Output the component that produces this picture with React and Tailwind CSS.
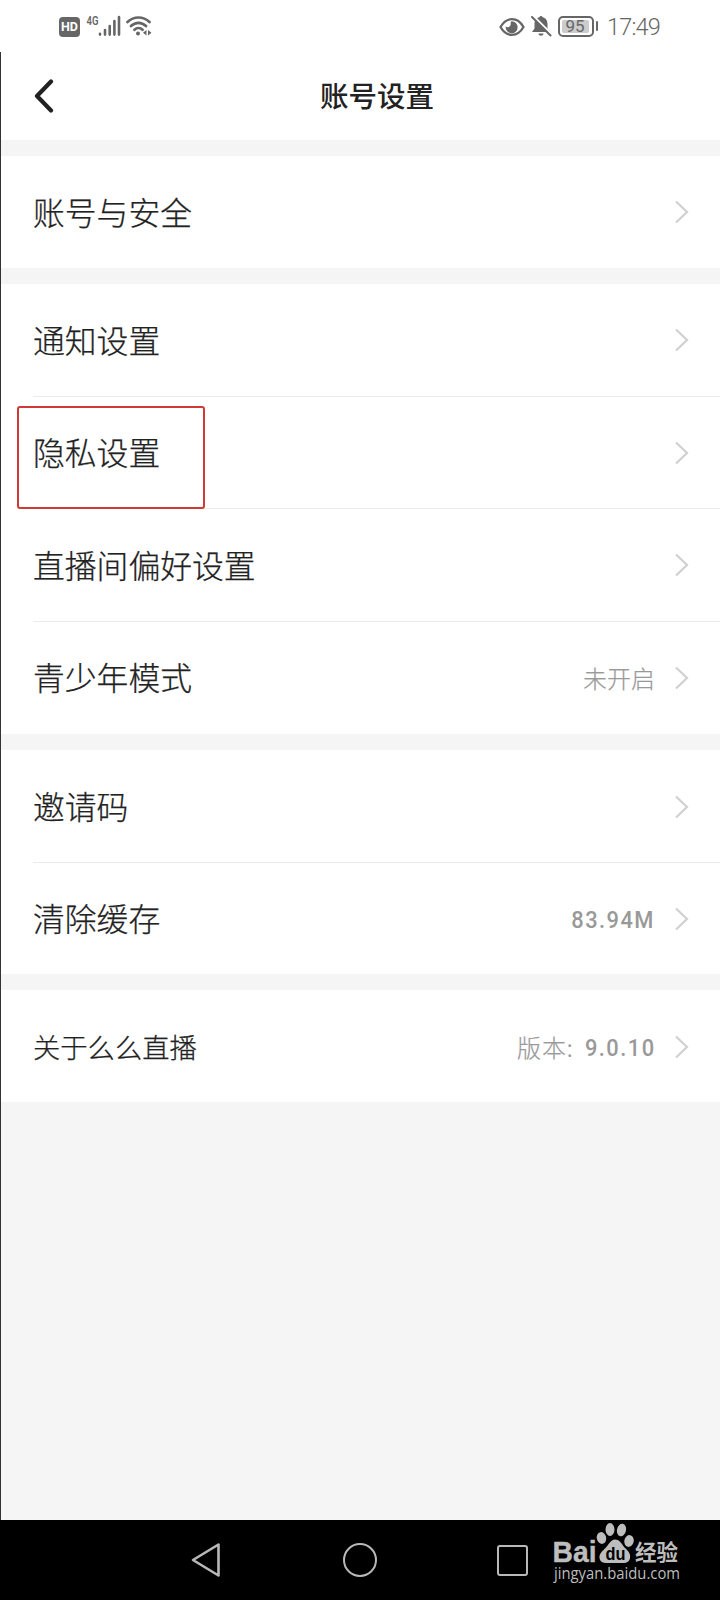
import React from 'react';

const groups = [
  { height: 'h-[112px]', rows: [{ label: '账号与安全' }] },
  {
    height: 'h-[450px]',
    rows: [
      { label: '通知设置' },
      { label: '隐私设置', marked: true },
      { label: '直播间偏好设置' },
      { label: '青少年模式', value: '未开启' },
    ],
  },
  { height: 'h-[224px]', low: true, rows: [{ label: '邀请码' }, { label: '清除缓存', number: '83.94M' }] },
  { height: 'h-[112px]', low: true, rows: [{ label: '关于么么直播', small: true, value: '版本:', number: '9.0.10' }] },
];

const StatusBar = () => (
  <div className="flex h-[52px] items-center justify-between pl-[59px] pr-[59px] text-[#666]">
    <div className="flex items-center">
      <div className="mt-0.5 flex h-5 w-[21px] items-center justify-center rounded-[4px] bg-[#666] font-['Roboto',sans-serif] text-[12.5px] font-bold text-white">
        HD
      </div>
      {/* 4G 信號 */}
      <svg className="ml-1.5 h-[22px] w-[35px] overflow-visible" viewBox="0 0 35 22">
        <text x="0.5" y="9.5" fontSize="12.5" fontWeight="600" fill="currentColor" textLength="12" lengthAdjust="spacingAndGlyphs" fontFamily="Roboto, sans-serif">4G</text>
        <path d="M14 18.800v0.800M19 15v4.600M23.700 11v8.600M28.400 6v13.600M33 2v17.600" stroke="currentColor" strokeWidth="2.6" strokeLinecap="round" />
      </svg>
      {/* WiFi */}
      <svg className="ml-[5px] h-[22px] w-[26px]" viewBox="0 0 26 22" fill="none" stroke="currentColor" strokeWidth="2.7" strokeLinecap="round">
        <path d="M1.500 7c6.500-6 15.500-6 22 0M5 11c4.500-4.200 10.500-4.200 15 0M8.500 14.800c2.300-2.200 5.700-2.200 8 0" />
        <circle cx="12" cy="18.500" r="2" fill="currentColor" stroke="none" />
        <path d="M20.500 15v5.500l-3.500-2.700zM22 15v5.500l3.500-2.700z" fill="currentColor" stroke="none" />
      </svg>
    </div>

    <div className="flex items-center">
      <svg className="mt-0.5 h-[20px] w-[26px]" viewBox="0 0 26 20" fill="none">
        <path d="M1.500 10C7.500-0.500 18.500-0.500 24.500 10 18.500 20.500 7.500 20.500 1.500 10z" stroke="currentColor" strokeWidth="2.300" />
        <path d="M12.500 4.200a6 6 0 1 1-5.800 5.300c1.800 1.600 5 .3 5-2.200 0-1.200-.2-2.300.8-3.100z" fill="currentColor" />
      </svg>
      <svg className="ml-[6px] h-[22px] w-[21px]" viewBox="0 0 21 22" fill="currentColor">
        <path d="M10 1c.9 0 1.500.6 1.500 1.300C15 3 16.500 5.800 16.500 9v4.500L19 17H1l2.500-3.500V9c0-3.200 1.500-6 5-6.700C8.500 1.600 9.100 1 10 1zM7.500 18.500h5c0 3-5 3-5 0z" />
        <path d="M2.200 0.800L21 19.500" stroke="white" strokeWidth="2" />
        <path d="M1 2L19.500 20.500" stroke="currentColor" strokeWidth="2" strokeLinecap="round" />
      </svg>
      <div className="ml-[6px] flex h-[21px] w-[36px] items-center rounded-[5px] border-2 border-[#666] p-[2px]">
        <div className="flex h-full w-[27px] items-center justify-center rounded-[2px] bg-[#ccc] font-['Roboto',sans-serif] text-[17px] leading-none">
          95
        </div>
      </div>
      <div className="ml-0.5 h-2.5 w-[2.500px] rounded-full bg-[#666]" />
      <span className="ml-[9px] mt-[3px] w-[54px] whitespace-nowrap font-['Roboto',sans-serif] text-[23.5px] font-light leading-none tracking-[-0.8px]">17:49</span>
    </div>
  </div>
);

const Row = ({ row, divider, low }) => (
  <div className={`relative flex flex-1 items-center justify-between pl-8 pr-[31px] ${low ? 'pt-px' : ''}`}>
    {divider && <div className={`absolute left-8 right-0 h-px bg-[#ebebeb] ${low ? '-bottom-px' : 'bottom-0'}`} />}
    {row.marked && <div className="absolute left-4 top-[9px] z-10 h-[103px] w-[188px] rounded-[3px] border-2 border-[#cf3a36]" />}
    <span className={`font-light text-[#222] [-webkit-text-stroke:0.25px] ${row.small ? 'text-[27.3px]' : '-mt-px text-[31.8px]'}`}>{row.label}</span>
    <div className="flex items-center text-[#999]">
      {row.value && (
        <span className={`text-[24px] font-light [-webkit-text-stroke:0.2px] ${row.number ? 'mr-1 tracking-[0.8px]' : ''}`}>{row.value}</span>
      )}
      {row.number && (
        <span className="mt-0.5 inline-block origin-right scale-x-[0.91] font-['Roboto',sans-serif] text-[24px] font-medium tracking-[1.6px]">
          {row.number}
        </span>
      )}
      <svg className="ml-5 h-6 w-[14px]" viewBox="0 0 14 24" fill="none" stroke="#d0d0d0" strokeWidth="2.200">
        <path d="M1 1.500L12 12 1 22.500" />
      </svg>
    </div>
  </div>
);

const Watermark = () => (
  <svg className="absolute left-[550px] top-0 h-20 w-[140px]" viewBox="0 0 140 80" fill="#bdbdbd">
    <text x="2.500" y="42" fontSize="29" fontWeight="700" stroke="#bdbdbd" strokeWidth="0.4" textLength="44" lengthAdjust="spacingAndGlyphs" fontFamily="Liberation Sans, sans-serif">Bai</text>
    <ellipse cx="51.500" cy="18" rx="4.700" ry="6" transform="rotate(-12 51.500 18)" />
    <ellipse cx="60" cy="9.500" rx="4.500" ry="6.500" />
    <ellipse cx="71.500" cy="10" rx="4.500" ry="6.300" transform="rotate(12 71.500 10)" />
    <ellipse cx="79" cy="21" rx="4.700" ry="6" transform="rotate(12 79 21)" />
    <path d="M65 19.500c5 0 7 5 10 8.500 3 3 6 5.500 5 10-1 5-5 5-8 5H57c-4 0-7-1-7.500-5-.5-4.500 3-7 6-10s5-8.500 9.500-8.500z" />
    <text x="55.500" y="39.500" fontSize="19" fontWeight="700" fill="#000" textLength="20" lengthAdjust="spacingAndGlyphs" fontFamily="Liberation Sans, sans-serif">du</text>
    <text x="85" y="40" fontSize="21.500" fontWeight="700" textLength="43" fontFamily="Noto Sans CJK SC, sans-serif">经验</text>
    <text x="4" y="59" fontSize="15.500" textLength="126" lengthAdjust="spacingAndGlyphs" fontFamily="Open Sans, sans-serif">jingyan.baidu.com</text>
  </svg>
);

const App = () => (
  <div className="flex h-[1600px] w-[720px] flex-col overflow-hidden bg-white font-['Noto_Sans_CJK_SC',sans-serif]">
    <StatusBar />

    <div className="flex flex-1 flex-col border-l border-[#333] bg-[#f5f5f5]">
      <header className="flex h-[88px] items-center bg-white pl-[33px]">
        <svg className="h-[34px] w-[20px]" viewBox="0 0 20 34" fill="none" stroke="#222" strokeWidth="4.200" strokeLinecap="round" strokeLinejoin="round">
          <path d="M17 2.500L3 17l14 14.500" />
        </svg>
        <h1 className="-mt-0.5 ml-[266px] text-[28.500px] font-medium text-[#222]">账号设置</h1>
      </header>
      <div className="flex flex-col gap-4 pt-4">
        {groups.map((group, i) => (
          <section key={i} className={`flex flex-col bg-white ${group.height}`}>
            {group.rows.map((row, j) => (
              <Row key={row.label} row={row} low={group.low} divider={j < group.rows.length - 1} />
            ))}
          </section>
        ))}
      </div>
    </div>

    {/* 導航鍵 */}
    <nav className="relative h-20 bg-black">
      <div className="flex h-full items-center pl-[191px] text-[#b8b8b8]">
        <svg className="h-9 w-[30px]" viewBox="0 0 30 36" fill="none" stroke="currentColor" strokeWidth="2.600" strokeLinejoin="round">
          <path d="M2 18L27.500 2.500v31z" />
        </svg>
        <div className="ml-[122px] h-[34px] w-[34px] rounded-full border-[2.500px] border-current" />
        <div className="ml-[120px] h-[31px] w-[31px] rounded-[3px] border-[2.500px] border-current" />
      </div>
      <Watermark />
    </nav>
  </div>
);

export default App;
